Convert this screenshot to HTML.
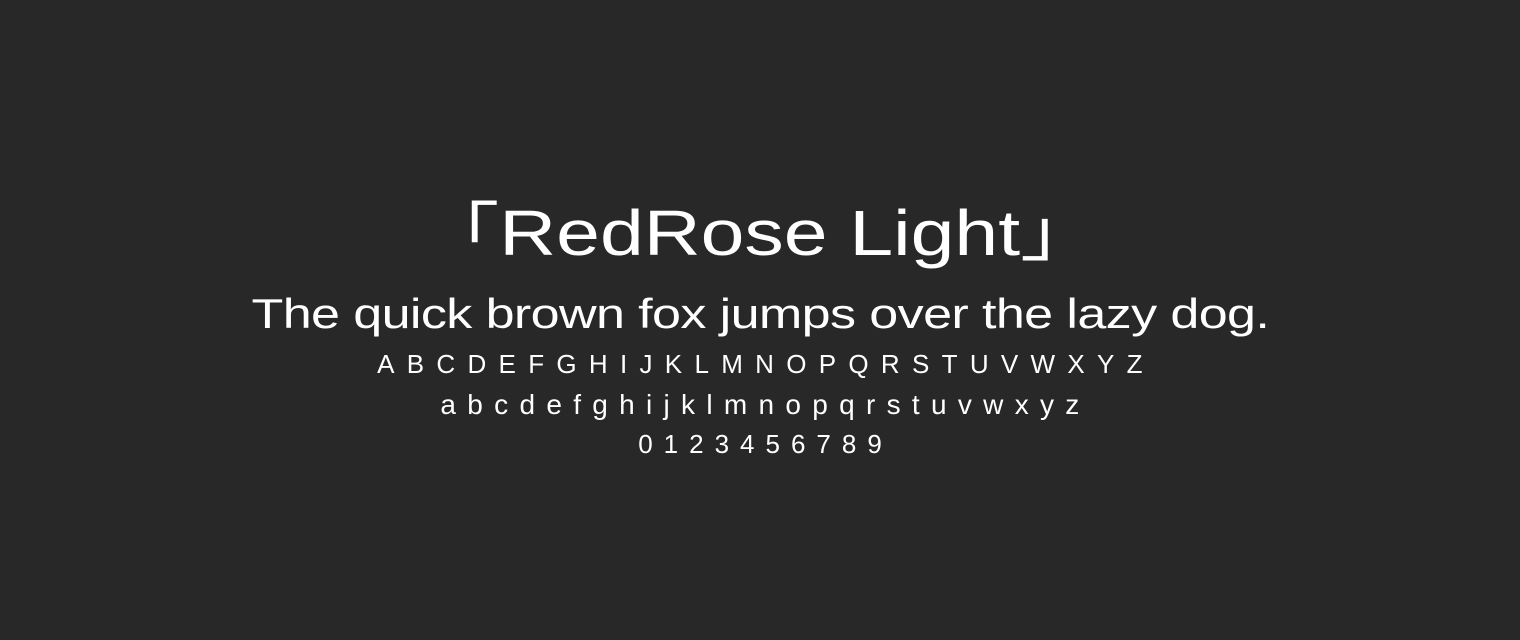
<!DOCTYPE html>
<html><head><meta charset="utf-8"><style>
html,body{margin:0;padding:0;}
body{width:1520px;height:640px;background:#282828;color:#fff;font-family:"Liberation Sans","Noto Sans CJK JP",sans-serif;position:relative;overflow:hidden;}
.l{position:absolute;left:0;width:1520px;text-align:center;white-space:nowrap;font-weight:normal;}
.s{display:inline-block;transform-origin:center;}
</style></head><body>
<div class="l" style="top:188px;font-size:64px;line-height:90px;"><span class="s" style="transform:scaleX(1.23);">「RedRose Light」</span></div>
<div class="l" style="top:289px;font-size:42px;line-height:50px;letter-spacing:-0.5px;"><span class="s" style="transform:scaleX(1.24);">The quick brown fox jumps over the lazy dog.</span></div>
<div class="l" style="top:348px;font-size:26px;line-height:32px;letter-spacing:12.3px;text-indent:12px;">ABCDEFGHIJKLMNOPQRSTUVWXYZ</div>
<div class="l" style="top:388px;font-size:28px;line-height:34px;letter-spacing:11.3px;text-indent:11px;">abcdefghijklmnopqrstuvwxyz</div>
<div class="l" style="top:428px;font-size:26px;line-height:32px;letter-spacing:11px;text-indent:11px;">0123456789</div>
</body></html>
